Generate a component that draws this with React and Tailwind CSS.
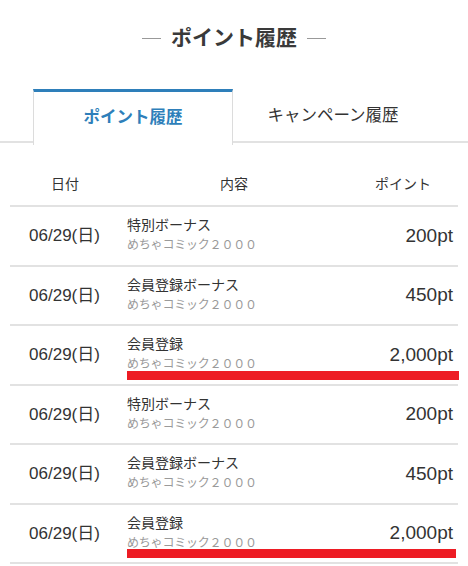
const rows = [
  { date: '06/29(日)', title: '特別ボーナス', pt: '200pt' },
  { date: '06/29(日)', title: '会員登録ボーナス', pt: '450pt' },
  { date: '06/29(日)', title: '会員登録', pt: '2,000pt', bar: 'w-[332px]' },
  { date: '06/29(日)', title: '特別ボーナス', pt: '200pt' },
  { date: '06/29(日)', title: '会員登録ボーナス', pt: '450pt' },
  { date: '06/29(日)', title: '会員登録', pt: '2,000pt', bar: 'w-[329px]' },
];

const font = { fontFamily: '"Liberation Sans", "Noto Sans CJK JP", sans-serif' };

export default function App() {
  return (
    <div className="w-[468px] h-[566px] overflow-hidden bg-white text-[#333]" style={font}>
      {/* Title */}
      <div className="flex items-center justify-center gap-[10px] pt-[23px] h-[89px] items-start">
        <span className="mt-[15px] w-[19px] h-px bg-[#999]" />
        <h1 className="text-[21px] leading-[30px] font-bold text-[#3a3a3a]">ポイント履歴</h1>
        <span className="mt-[15px] w-[19px] h-px bg-[#999]" />
      </div>

      {/* Tabs */}
      <div className="flex border-b-2 border-[#e2e2e2] h-[54px]">
        <div className="ml-[33px] w-[200px] h-[56px] -mb-[2px] bg-white border-t-[3px] border-t-[#2e7fba] border-x border-x-[#dcdcdc] flex items-center justify-center">
          <span className="text-[16.5px] font-bold text-[#2e7fba] -mt-[2px]">ポイント履歴</span>
        </div>
        <div className="w-[200px] flex items-center justify-center">
          <span className="text-[16.5px] text-[#333]">キャンペーン履歴</span>
        </div>
      </div>

      {/* Table */}
      <div className="mx-[10px]">
        <div className="grid grid-cols-[110px_1fr_110px] pt-[31px] pb-[11px] text-[14px] leading-[20px] border-b-2 border-[#e2e2e2]">
          <div className="text-center">日付</div>
          <div className="text-center">内容</div>
          <div className="text-center">ポイント</div>
        </div>
        {rows.map((r, i) => (
          <div
            key={i}
            className="relative grid grid-cols-[110px_1fr_110px] items-center h-[59.5px] border-b-2 border-[#e2e2e2]"
          >
            <div className="text-center text-[17px] pr-[1px]">{r.date}</div>
            <div className="pl-[7px] flex flex-col -mt-[1px]">
              <span className="text-[14px] leading-[20px] text-[#333]">{r.title}</span>
              <span className="text-[12px] leading-[20px] text-[#9a9a9a] tracking-[-0.2px]">めちゃコミック２０００</span>
            </div>
            <div className="text-right pr-[5px] text-[19px]">{r.pt}</div>
            {r.bar && (
              <div className={`absolute left-[117px] bottom-[4px] h-[9px] bg-[#ed1c24] ${r.bar}`} />
            )}
          </div>
        ))}
      </div>
    </div>
  );
}
